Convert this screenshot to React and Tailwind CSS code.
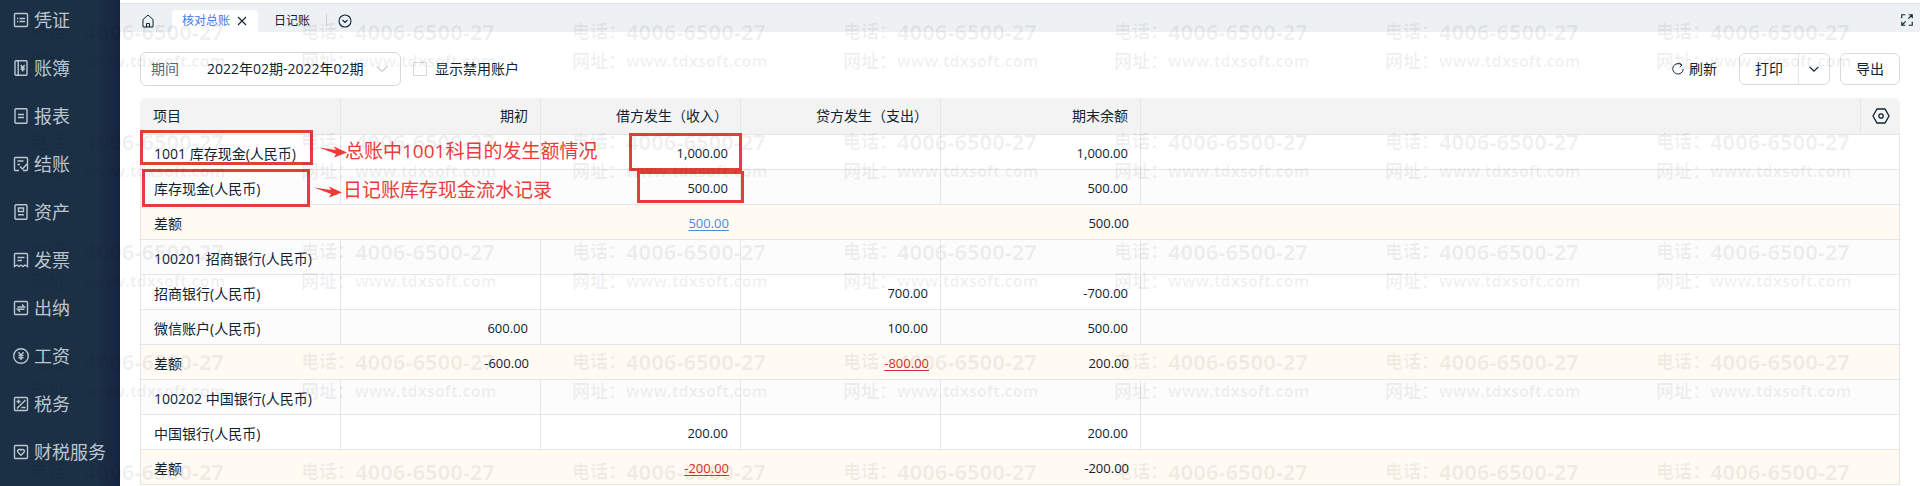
const MENU = [
  { label: '凭证', icon: 'voucher' },
  { label: '账簿', icon: 'ledger' },
  { label: '报表', icon: 'report' },
  { label: '结账', icon: 'closing' },
  { label: '资产', icon: 'asset' },
  { label: '发票', icon: 'invoice' },
  { label: '出纳', icon: 'cashier' },
  { label: '工资', icon: 'salary' },
  { label: '税务', icon: 'tax' },
  { label: '财税服务', icon: 'service' },
]

const HEADERS = ['期初', '借方发生（收入）', '贷方发生（支出）', '期末余额']

const ROWS = [
  { name: '1001 库存现金(人民币)', values: ['', '1,000.00', '', '1,000.00'] },
  { name: '库存现金(人民币)', values: ['', '500.00', '', '500.00'], shaded: true },
  { name: '差额', values: ['', '500.00', '', '500.00'], diff: true },
  { name: '100201 招商银行(人民币)', values: ['', '', '', ''], shaded: true },
  { name: '招商银行(人民币)', values: ['', '', '700.00', '-700.00'] },
  { name: '微信账户(人民币)', values: ['600.00', '', '100.00', '500.00'], shaded: true },
  { name: '差额', values: ['-600.00', '', '-800.00', '200.00'], diff: true },
  { name: '100202 中国银行(人民币)', values: ['', '', '', ''], shaded: true },
  { name: '中国银行(人民币)', values: ['', '200.00', '', '200.00'] },
  { name: '差额', values: ['', '-200.00', '', '-200.00'], diff: true },
]

const ICON_PATHS = {
  voucher: 'M2.5 1.5h11a1 1 0 0 1 1 1v11a1 1 0 0 1-1 1h-11a1 1 0 0 1-1-1v-11a1 1 0 0 1 1-1zM4 6.5h1.2M6.5 6.5H12M4 9.5h1.2M6.5 9.5H12',
  ledger: 'M3 .7h10a1 1 0 0 1 1 1v12.6a1 1 0 0 1-1 1H3a1 1 0 0 1-1-1V1.7a1 1 0 0 1 1-1zM5.2 1v14M7.7 5l2 2.5 2-2.5M9.7 7.5V11.5M7.7 7.7h4M7.7 9.5h4',
  report: 'M3 .7h10a1 1 0 0 1 1 1v12.6a1 1 0 0 1-1 1H3a1 1 0 0 1-1-1V1.7a1 1 0 0 1 1-1zM5 6.5h6M5 9.5h6',
  closing: 'M6 14.5H2.5a1 1 0 0 1-1-1v-11a1 1 0 0 1 1-1h11a1 1 0 0 1 1 1v11a1 1 0 0 1-1 1H10M4.5 5h6M4.5 8.5H7M7 10.5l2.5 2.5 4.5-5',
  asset: 'M3 .7h10a1 1 0 0 1 1 1v12.6a1 1 0 0 1-1 1H3a1 1 0 0 1-1-1V1.7a1 1 0 0 1 1-1zM5.5 4h5v3.5h-5zM5 10.7h6',
  invoice: 'M2.5 1.5h11a1 1 0 0 1 1 1v12l-2.5-1.5-2 1.5-2-1.5-2 1.5-2-1.5-2.5 1.5v-12a1 1 0 0 1 1-1zM4.5 5.5h7M4.5 8.5h4.5',
  cashier: 'M2.5 1.5h11a1 1 0 0 1 1 1v11a1 1 0 0 1-1 1h-11a1 1 0 0 1-1-1v-11a1 1 0 0 1 1-1zM4.5 7h7L9 4.5M11.5 9.3h-7L7 11.8',
  salary: 'M8 .7a7.3 7.3 0 1 0 0 14.6A7.3 7.3 0 0 0 8 .7zM5.5 4.3L8 7.3l2.5-3M8 7.3V12M5.5 7.6h5M5.5 9.8h5',
  tax: 'M2.5 1.5h11a1 1 0 0 1 1 1v11a1 1 0 0 1-1 1h-11a1 1 0 0 1-1-1v-11a1 1 0 0 1 1-1zM12.5 4L4 12.5M3.5 5.5h4M5.5 3.5v4M8.5 11.5h4',
  service: 'M2.5 1.5h11a1 1 0 0 1 1 1v11a1 1 0 0 1-1 1h-11a1 1 0 0 1-1-1v-11a1 1 0 0 1 1-1zM8 11.2L5 8.2a1.7 1.7 0 0 1 3-2 1.7 1.7 0 0 1 3 2z',
}

const Icon = ({ d, className = '', viewBox = '0 0 16 16', strokeWidth = 1.1 }) => (
  <svg
    className={`shrink-0 ${className}`}
    viewBox={viewBox}
    fill="none"
    stroke="currentColor"
    strokeWidth={strokeWidth}
    aria-hidden="true"
  >
    <path d={d} />
  </svg>
)

const Sidebar = () => (
  <nav className="w-30 shrink-0 overflow-hidden bg-linear-to-r from-[#1c3045] from-80% to-[#162440]">
    <ul className="-mt-1">
      {MENU.map((item) => (
        <li key={item.label}>
          <a href="#" className="flex h-12 items-center gap-[5px] pl-[13px] text-lg whitespace-nowrap text-[#bcc6d0]">
            <Icon d={ICON_PATHS[item.icon]} className="size-4" strokeWidth={1.4} />
            {item.label}
          </a>
        </li>
      ))}
    </ul>
  </nav>
)

const TabBar = () => (
  <div className="mt-[3px] flex h-[29px] items-end border-t border-[#dfe3e6] bg-[#edf1f4]">
    <button type="button" aria-label="首页" className="flex h-[22px] items-center pr-4 pl-5">
      <Icon d="M3 6.500L8 2l5 4.500V14H3zM6.500 14v-3.500h3V14" className="size-4" strokeWidth={1} />
    </button>
    <div className="flex h-[22px] items-center gap-1 rounded-t bg-white pr-2 pl-2.5">
      <a href="#" className="text-xs text-[#3d7ee8]">核对总账</a>
      <button type="button" aria-label="关闭">
        <Icon d="M4 4l8 8M12 4l-8 8" className="size-4" />
      </button>
    </div>
    <a href="#" className="flex h-[22px] items-center pl-4 text-xs">日记账</a>
    <span className="mb-1.5 ml-4 h-3 w-px bg-[#c9ced2]" />
    <button type="button" aria-label="更多" className="ml-2.5 flex h-[22px] items-center">
      <Icon d="M8 2a6 6 0 1 0 0 12A6 6 0 0 0 8 2zM5.500 7L8 9.500 10.500 7" className="size-4" />
    </button>
    <button type="button" aria-label="全屏" className="mr-1.5 ml-auto flex h-6 items-center">
      <Icon
        d="M2 6V2H6M10 2h4V6M14 10v4H10M6 14H2V10M9.500 6.500L14 2M2 14l4.500-4.500"
        className="size-3.5"
        strokeWidth={1.3}
      />
    </button>
  </div>
)

const Toolbar = () => (
  <div className="flex items-center px-5 pt-5 text-sm">
    <label className="flex h-[34px] w-[261px] items-center rounded-md border border-[#d5d8da] pl-2.5 text-[#596670]">
      期间
      <select className="ml-7 h-6 appearance-none text-[#0e2433]" defaultValue="2022-02">
        <option value="2022-02">2022年02期-2022年02期</option>
      </select>
      <Icon d="M3 5.500l5 5 5-5" className="ml-2.5 size-4 text-[#a8aeb3]" strokeWidth={1} />
    </label>
    <label className="ml-3 flex items-center gap-2">
      <input type="checkbox" className="size-3.5 appearance-none border border-[#d5d8da] bg-white" />
      显示禁用账户
    </label>
    <button type="button" className="ml-auto flex items-center gap-1">
      <Icon d="M12 3.300A6 6 0 1 0 14 8M9.500 1l3 2.500-2.500 2.500" className="size-3.5" />
      刷新
    </button>
    <div className="ml-[22px] flex h-8 rounded-md border border-[#d9dcde]">
      <button type="button" className="px-[15px]">打印</button>
      <button type="button" aria-label="打印选项" className="flex items-center border-l border-[#e3e5e7] px-2">
        <Icon d="M3 5.500l5 5 5-5" className="size-3.5" strokeWidth={1.4} />
      </button>
    </div>
    <button type="button" className="ml-2.5 h-8 rounded-md border border-[#d9dcde] px-[15px]">导出</button>
  </div>
)

const Amount = ({ value, linked }) => {
  if (!value || !linked) return value
  const color = value.startsWith('-') ? 'text-[#d92f2f]' : 'text-[#4a8be0]'
  return <a href="#" className={`underline underline-offset-2 ${color}`}>{value}</a>
}

const rowColor = (row) => {
  if (row.diff) return 'bg-[#fffaf2]'
  return row.shaded ? 'bg-[#fcfcfc]' : 'bg-white'
}

const LedgerTable = () => (
  <table className="w-full table-fixed border-separate border-spacing-0 text-sm">
    <colgroup>
      <col className="w-[201px]" />
      <col className="w-[200px]" />
      <col className="w-[200px]" />
      <col className="w-[200px]" />
      <col className="w-[200px]" />
      <col />
      <col className="w-[39px]" />
    </colgroup>
    <thead>
      <tr className="h-[37px] bg-white">
        <th className="rounded-tl-md border-r border-b border-[#e6e6e6] bg-[#f3f3f3] pl-[13px] text-left font-normal">项目</th>
        {HEADERS.map((header) => (
          <th key={header} className="border-r border-b border-[#e6e6e6] bg-[#f3f3f3] pr-3 text-right font-normal">
            {header}
          </th>
        ))}
        <th className="border-r border-b border-[#e6e6e6] bg-[#f3f3f3]" />
        <th className="rounded-tr-md border-b border-[#e6e6e6] bg-[#f3f3f3] font-normal">
          <button type="button" aria-label="列设置" className="mx-auto block">
            <Icon
              viewBox="0 0 18 18"
              d="M5 2h8l4 7-4 7H5L1 9zM9 6.800a2.200 2.200 0 1 0 0 4.400 2.200 2.200 0 0 0 0-4.400z"
              className="size-[18px]"
              strokeWidth={1.3}
            />
          </button>
        </th>
      </tr>
    </thead>
    <tbody>
      {ROWS.map((row, i) => (
        <tr key={i} className={`h-[35px] ${rowColor(row)}`}>
          <td className={`border-b border-l border-[#e6e6e6] pt-[3px] pl-[13px] ${row.diff ? '' : 'border-r'}`}>{row.name}</td>
          {row.values.map((value, j) => (
            <td key={j} className={`border-b border-[#e6e6e6] pt-[3px] pr-3 text-right text-[13px] ${row.diff ? '' : 'border-r'}`}>
              <Amount value={value} linked={row.diff && (j === 1 || j === 2)} />
            </td>
          ))}
          <td colSpan={2} className="border-r border-b border-[#e6e6e6]" />
        </tr>
      ))}
    </tbody>
  </table>
)

const Arrow = ({ className }) => (
  <svg className={`absolute ${className}`} viewBox="0 0 28 12" fill="#f03a38" aria-hidden="true">
    <path d="M0 1.500L17 4 15 .500 28 6.500 15 11.500l2-3.500z" />
  </svg>
)

// Hand-placed callouts over the table
const Annotations = () => (
  <div className="pointer-events-none text-[19px] leading-6 text-[#ee3b39]">
    <div className="absolute top-[130px] left-5 h-[35px] w-[173px] border-3 border-[#e63c3a]" />
    <div className="absolute top-[169px] left-[22px] h-[38px] w-[168px] border-3 border-[#e63c3a]" />
    <div className="absolute top-[133px] left-[509px] h-[38px] w-[113px] border-3 border-[#e63c3a]" />
    <div className="absolute top-[171px] left-[517px] h-8 w-[107px] border-3 border-[#e63c3a]" />
    <Arrow className="top-[146px] left-[199px] h-3 w-7" />
    <Arrow className="top-[186px] left-[194px] h-3 w-7" />
    <span className="absolute top-[139px] left-[225px] whitespace-nowrap">总账中1001科目的发生额情况</span>
    <span className="absolute top-[178px] left-[223px] whitespace-nowrap">日记账库存现金流水记录</span>
  </div>
)

const Watermark = () => (
  <div className="pointer-events-none absolute inset-0 overflow-hidden text-black/6" aria-hidden="true">
    <div className="grid w-max grid-cols-[repeat(7,271px)] pt-4 pl-[30px]">
      {Array.from({ length: 35 }, (_, i) => (
        <div key={i} className="grid h-[110px] grid-cols-[54px_auto] content-start justify-start font-bold whitespace-nowrap">
          <span className="text-lg leading-[30px]">电话：</span>
          <span className="text-[22px] leading-[30px]">4006-6500-27</span>
          {i < 28 && (
            <>
              <span className="text-lg leading-[30px]">网址：</span>
              <span className="text-base leading-[30px]">www.tdxsoft.com</span>
            </>
          )}
        </div>
      ))}
    </div>
  </div>
)

export default function App() {
  return (
    <div className="relative flex min-h-screen overflow-hidden bg-white font-['Open_Sans','Noto_Sans_CJK_SC',sans-serif] text-[#0e2433]">
      <Sidebar />
      <main className="relative min-w-0 flex-1">
        <TabBar />
        <Toolbar />
        <div className="px-5 pt-3">
          <LedgerTable />
        </div>
        <Annotations />
      </main>
      <Watermark />
    </div>
  )
}
